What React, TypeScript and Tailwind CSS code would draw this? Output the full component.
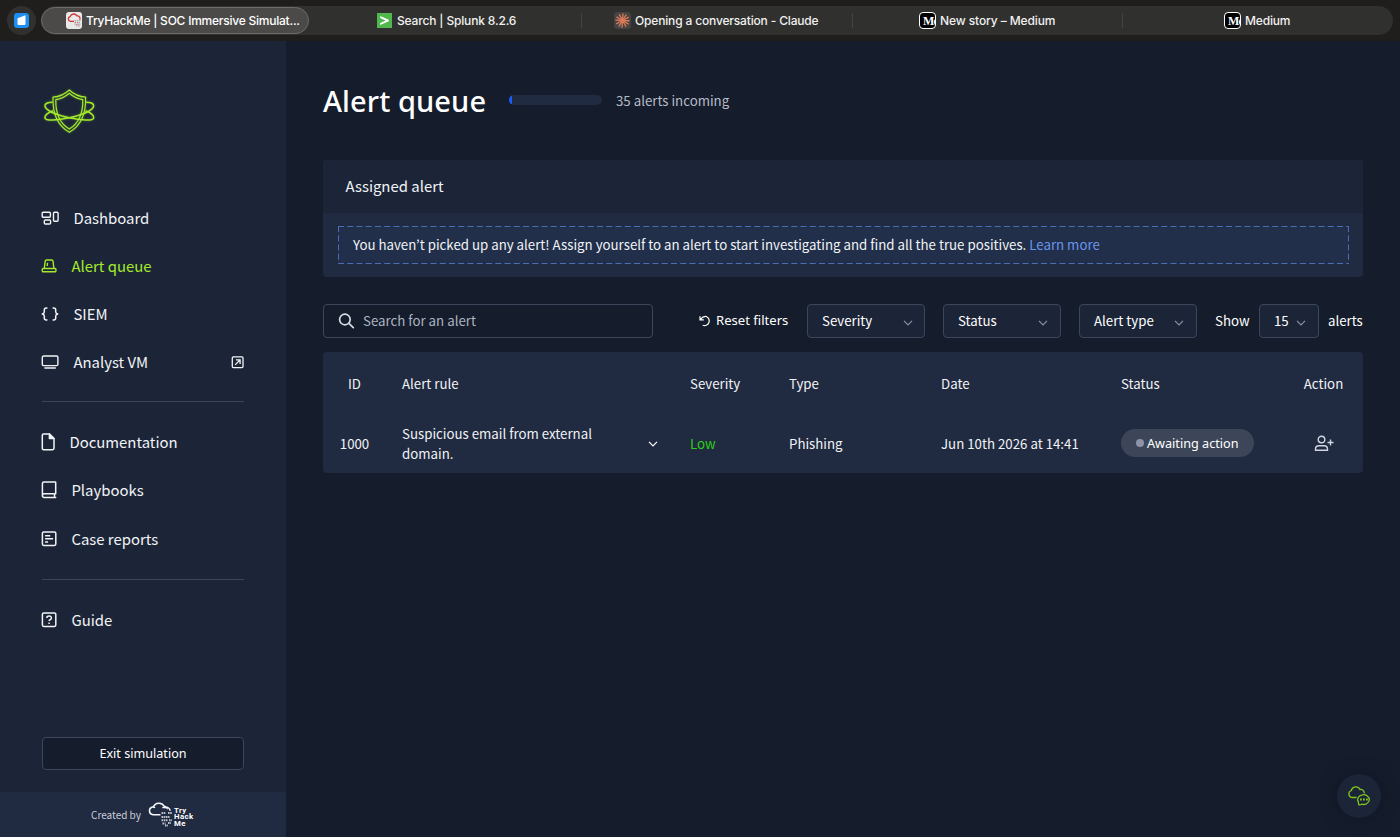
import type { ReactNode } from 'react';

const SANS = "font-['Noto_Sans_CJK_KR','Open_Sans',sans-serif]";
const HEAD = "font-['Noto_Sans',sans-serif]";

function ThmFavicon() {
  return (
    <svg width="16" height="17" viewBox="0 0 16 17">
      <rect width="16" height="17" rx="3" fill="#e9e9ea" />
      <path d="M8 9.300H4.400a2.400 2.400 0 0 1-.3-4.700A3.800 3.800 0 0 1 11 3.900a2.600 2.600 0 0 1 2.700 3.800" fill="none" stroke="#c8373b" strokeWidth="1.300" />
      <path d="M8.500 8.500h6M8.500 10.300h4M8.500 12.100h6M10 14h4.500" stroke="#a9a3a6" strokeWidth="1.200" strokeDasharray="1.600 .8" />
      <path d="M9 10.400h5M10 12.800h4" stroke="#d06468" strokeWidth=".8" strokeDasharray="1 1" />
    </svg>
  );
}

function SplunkFavicon() {
  return (
    <svg width="15" height="15" viewBox="0 0 15 15">
      <rect width="15" height="15" fill="#50b84c" />
      <path d="M3.200 3.100 11.800 6.800v1.500L3.200 12v-2l5.400-2.500-5.400-2.400z" fill="#fff" />
    </svg>
  );
}

function BurstFavicon() {
  const rays = [4, 33, 62, 92, 121, 150, 184, 212, 242, 273, 301, 332];
  return (
    <svg width="17" height="17" viewBox="0 0 17 17">
      <rect width="17" height="17" rx="3.500" fill="#454443" />
      <g stroke="#de7a5b" strokeWidth="1.300" strokeLinecap="round">
        {rays.map((a) => (
          <path key={a} d="M8.500 8.500V1.900" transform={`rotate(${a} 8.500 8.500)`} />
        ))}
      </g>
    </svg>
  );
}

function MediumFavicon() {
  return (
    <span className="flex h-[17px] w-[17px] items-center overflow-hidden rounded-[4px] border border-white bg-black pl-[3px] font-['Liberation_Serif',serif] text-[12px] leading-none font-bold tracking-[-0.8px] text-white">
      Me
    </span>
  );
}

function Tab({ icon, children, className }: { icon: ReactNode; children: ReactNode; className: string }) {
  return (
    <div className={`flex shrink-0 items-center gap-[4px] whitespace-nowrap ${className}`}>
      {icon}
      <span>{children}</span>
    </div>
  );
}

function TabBar() {
  return (
    <header className="flex h-[41px] shrink-0 items-center bg-[#1f1e1c] pl-[7px] font-['Inter',sans-serif] text-[12px] font-medium tracking-[-0.160px] text-[#f1f1f0]">
      <div className="flex h-[29px] w-[29px] items-center justify-center rounded-full bg-[#30302f]">
        <svg width="16" height="15" viewBox="0 0 16 15">
          <rect width="15" height="15" rx="3.200" fill="#1d8ff0" />
          <path d="M3.500 5.200 10.700 2.400q.8-.2.8.6V11q0 1-1 1h-6q-1 0-1-1z" fill="#fff" />
        </svg>
      </div>
      <div className="ml-[5px] flex h-[29px] w-[1352px] items-center rounded-full bg-[#30302f]">
        <Tab icon={<ThmFavicon />} className="h-[27px] w-[268px] rounded-full border border-[#6d6c6b] bg-[#4b4a49] pl-[24px] tracking-[-0.230px] text-white">
          TryHackMe | SOC Immersive Simulat...
        </Tab>
        <Tab icon={<SplunkFavicon />} className="w-[272px] pl-[68px]">
          <span className="ml-[1px]">Search | Splunk 8.2.6</span>
        </Tab>
        <span className="h-[15px] w-px bg-[#454443]" />
        <Tab icon={<BurstFavicon />} className="w-[270px] pl-[32px]">Opening a conversation - Claude</Tab>
        <span className="h-[15px] w-px bg-[#454443]" />
        <Tab icon={<MediumFavicon />} className="w-[269px] pl-[66px] tracking-[-0.1px]">New story – Medium</Tab>
        <span className="h-[15px] w-px bg-[#454443]" />
        <Tab icon={<MediumFavicon />} className="pl-[101px]">Medium</Tab>
      </div>
    </header>
  );
}

function ShieldLogo() {
  return (
    <svg className="ml-[1px] drop-shadow-[0_0_1px_#a3ea2a60]" width="54" height="46" viewBox="-1 0 54 46" fill="none" stroke="#a3ea2a">
      <path d="M26.300 1C30.500 5 36 7.700 42.600 8.200C43 20 41 35 26.300 43.200C11.600 35 9.600 20 10 8.200C16.600 7.700 22.100 5 26.300 1Z" strokeWidth="1.200" />
      <path d="M26.300 4.300C30.500 8 35 10.200 39.800 10.700C40 21 38 33 26.300 40C14.600 33 12.600 21 12.800 10.700C17.600 10.200 22.100 8 26.300 4.300Z" strokeWidth="1.200" />
      <path d="M9.500 13.300C4.500 13.300 1.500 14.500 2 17.300C3 21.500 14 26 26.300 28.800C37 31.200 50 32.500 50.700 28.800C51 26.500 47.500 23.800 42.500 21.800" strokeWidth="1.500" />
      <path d="M43.100 13.300C48.100 13.300 51.100 14.500 50.600 17.300C49.600 21.500 38.600 26 26.300 28.800C15.600 31.200 2.600 32.500 1.900 28.800C1.600 26.500 5.100 23.800 10.100 21.800" strokeWidth="1.500" />
    </svg>
  );
}

const icons = {
  dashboard: (
    <svg width="18" height="15" viewBox="0 0 18 15" fill="none" stroke="currentColor" strokeWidth="1.400">
      <rect x="1.200" y="1.200" width="8.200" height="5" rx="1" />
      <rect x="3.300" y="9" width="6.300" height="4" rx="1" />
      <rect x="12.500" y="1.200" width="4.600" height="9" rx="1" />
    </svg>
  ),
  alert: (
    <svg width="16" height="14" viewBox="0 0 16 14" fill="none" stroke="currentColor" strokeWidth="1.400">
      <rect x="1.300" y="9.500" width="13.600" height="3.200" rx=".8" />
      <path d="M3.300 9.300 4.200 2.200Q4.400 1 5.500 1h5.200Q11.800 1 12 2.200l.9 7.100M6.500 3.700 6.200 7" />
    </svg>
  ),
  siem: (
    <svg width="18" height="14" viewBox="0 0 18 14" fill="none" stroke="currentColor" strokeWidth="1.500" strokeLinecap="round" strokeLinejoin="round">
      <path d="M5.900 1h-.6q-2 0-2 2v1.700q0 1.800-2 2.300 2 .5 2 2.300V11q0 2 2 2h.6M12.100 1h.6q2 0 2 2v1.700q0 1.800 2 2.300-2 .5-2 2.300V11q0 2-2 2h-.6" />
    </svg>
  ),
  vm: (
    <svg width="18" height="14" viewBox="0 0 18 14" fill="none" stroke="currentColor" strokeWidth="1.400" strokeLinecap="round">
      <rect x="1.300" y="1" width="15.600" height="9.600" rx="1.300" />
      <path d="M3.900 13h10.400" />
    </svg>
  ),
  doc: (
    <svg width="14" height="18" viewBox="0 0 14 18" fill="none" stroke="currentColor" strokeWidth="1.500" strokeLinejoin="round">
      <path d="M2.600 1H8.400L13 5.500v9.800q0 1.400-1.400 1.400h-9Q1.300 16.700 1.300 15.300V2.300Q1.300 1 2.600 1Z" />
      <path d="M8.400 1v4.500h4.500z" fill="currentColor" />
    </svg>
  ),
  book: (
    <svg width="16" height="18" viewBox="0 0 16 18" fill="none" stroke="currentColor" strokeWidth="1.500" strokeLinecap="round" strokeLinejoin="round">
      <path d="M14.700 16.500H3.300Q1.400 16.500 1.400 14.700V2.600Q1.400 1 3 1h11.300q.4 0 .4.500v11.300H3.300Q1.400 12.800 1.400 14.700M13.500 13v3.300" />
    </svg>
  ),
  report: (
    <svg width="16" height="16" viewBox="0 0 16 16" fill="none" stroke="currentColor" strokeWidth="1.500">
      <rect x="1.400" y="1" width="13.400" height="13.400" rx="1.300" />
      <path d="M4.100 4.700h5.200M4.100 7.800h8M4.100 10.900h3" />
    </svg>
  ),
  guide: (
    <svg width="16" height="16" viewBox="0 0 16 16" fill="none" stroke="currentColor" strokeWidth="1.500">
      <rect x="1.400" y="1" width="13.400" height="13.400" rx="1.300" />
      <path d="M5.800 6.100Q5.800 4 8.100 4T10.400 6Q10.400 7.200 9.100 7.700 8.100 8.100 8.100 9.100M8.100 10.400v1.700" />
    </svg>
  ),
};

function NavItem({ icon, label, active, external }: { icon: ReactNode; label: string; active?: boolean; external?: boolean }) {
  return (
    <a className={`flex h-[48px] items-center text-[14.900px] ${active ? 'text-[#a3ea2a]' : 'text-[#f1f3f6]'}`}>
      {icon}
      <span className="ml-[14.400px] leading-none">{label}</span>
      {external && (
        <svg className="ml-auto" width="13" height="13" viewBox="0 0 13 13" fill="none" stroke="currentColor" strokeWidth="1.300">
          <rect x="1.300" y=".9" width="10.700" height="10.700" rx="1" />
          <path d="M4.100 8.900 9 4M5 3.800h4.100v4.100" />
        </svg>
      )}
    </a>
  );
}

function ThmLogo() {
  return (
    <div className="flex">
      <svg width="25" height="27" viewBox="0 0 25 27" fill="none" stroke="#f4f6f9">
        <path d="M12.500 13.800H5A4 4 0 0 1 4.300 6Q5.700 5.800 7 6.700 6.200 6 5.300 5.900A6.100 6.100 0 0 1 16.200 5.200Q17.700 5.300 18.500 6.900 16.200 5.600 14.500 6.700 21 4.600 22.300 9.700" strokeWidth="1.500" />
        <path d="M13.500 12h4M20 12h4M13.500 16h8M13.500 19.300h6M21 19.300h3M14.500 22.500h3M20 22h3M17 24.500h3" strokeWidth="2" strokeDasharray="1.600 .6" opacity=".75" />
      </svg>
      <div className="flex flex-col pt-[6.500px] pl-[1px] font-['Roboto',sans-serif] text-[7.800px] leading-[6.700px] font-bold tracking-[0.450px] text-white">
        <span>Try</span>
        <span>Hack</span>
        <span>Me</span>
      </div>
    </div>
  );
}

function Sidebar() {
  return (
    <aside className="flex w-[286px] shrink-0 flex-col bg-[#1c2538]">
      <div className="flex flex-1 flex-col pt-[48px] pr-[42px] pl-[41px]">
        <ShieldLogo />
        <nav className="mt-[59px] flex flex-col">
          <NavItem icon={icons.dashboard} label="Dashboard" />
          <NavItem icon={icons.alert} label="Alert queue" active />
          <NavItem icon={icons.siem} label="SIEM" />
          <NavItem icon={icons.vm} label="Analyst VM" external />
          <hr className="mt-[15px] mb-[16px] ml-[1px] border-[#3c465b]" />
          <NavItem icon={icons.doc} label="Documentation" />
          <NavItem icon={icons.book} label="Playbooks" />
          <div className="pt-[1px]">
            <NavItem icon={icons.report} label="Case reports" />
          </div>
          <hr className="mt-[16px] mb-[16px] ml-[1px] border-[#3c465b]" />
          <NavItem icon={icons.guide} label="Guide" />
        </nav>
        <button className={`mt-auto mb-[22px] ml-[1px] h-[33px] w-[202px] rounded-[4px] border border-[#3d475b] bg-[#151c2b] pt-[1px] text-[12.600px] text-white ${HEAD}`}>
          Exit simulation
        </button>
      </div>
      <footer className="flex h-[45px] items-center bg-[#202a40] pl-[91px] text-[10px] text-[#c9ced8]">
        <span className="mr-[7px]">Created by</span>
        <ThmLogo />
      </footer>
    </aside>
  );
}

function Chevron({ className }: { className: string }) {
  return (
    <svg className={className} width="10" height="6" viewBox="0 0 10 6" fill="none" stroke="currentColor" strokeWidth="1.200">
      <path d="M1 .8 5 4.800 9 .8" />
    </svg>
  );
}

function Select({ label, className }: { label: string; className: string }) {
  return (
    <div className={`flex h-[34px] shrink-0 items-center justify-between rounded-[4px] border border-[#3b465b] bg-[#1c2538] pl-[14px] text-white ${className}`}>
      <span>{label}</span>
      <Chevron className="mt-[3px] text-[#8790a2]" />
    </div>
  );
}

const COLS = 'grid grid-cols-[79px_288px_99px_152px_180px_163px_79px] items-center';

function AlertTable() {
  return (
    <section className="mt-[14px] h-[121px] rounded-[4px] bg-[#202a40] text-[13.280px] text-[#f1f3f6]">
      <div className={`${COLS} h-[63px]`}>
        <span className="w-[63px] text-center">ID</span>
        <span>Alert rule</span>
        <span>Severity</span>
        <span>Type</span>
        <span>Date</span>
        <span>Status</span>
        <span className="text-center">Action</span>
      </div>
      <div className={`${COLS} h-[58px]`}>
        <span className="w-[63px] text-center">1000</span>
        <div className="flex items-center justify-between pr-[32px]">
          <span className="w-[210px] leading-[20px]">Suspicious email from external domain.</span>
          <Chevron className="text-white" />
        </div>
        <span className="text-[#2fd016]">Low</span>
        <span>Phishing</span>
        <span>Jun 10th 2026 at 14:41</span>
        <span className={`mb-[2px] flex h-[28px] w-[133px] items-center rounded-full bg-[#3d4658] pl-[15px] text-[12.650px] text-white ${HEAD}`}>
          <i className="mr-[3px] h-[8px] w-[8px] rounded-full bg-[#8d94a8]" />
          Awaiting action
        </span>
        <svg className="mx-auto mb-[2px]" width="20" height="17" viewBox="0 0 20 17" fill="none" stroke="#cfd6e2" strokeWidth="1.400">
          <circle cx="7.500" cy="4.500" r="3.300" />
          <path d="M1.500 15.300V14Q1.500 10.800 5 10.800h5q3.500 0 3.500 3.200v1.300zM16.500 4.500v6M13.500 7.500h6" />
        </svg>
      </div>
    </section>
  );
}

function AlertQueue() {
  return (
    <main className="relative flex flex-1 flex-col bg-[#151c2b] pt-[37px] pr-[37px] pl-[37px]">
      <div className="flex h-[44px] items-center">
        <h1 className={`w-[186px] text-[29px] leading-none font-medium tracking-[0.100px] text-white ${HEAD}`}>Alert queue</h1>
        <div className="h-[10px] w-[93px] overflow-hidden rounded-full bg-[#202a40]">
          <div className="h-full w-[3px] bg-[#1a5cf5]" />
        </div>
        <span className="mt-[2px] ml-[14px] text-[13.280px] text-[#b5bbc8]">35 alerts incoming</span>
      </div>

      <section className="mt-[38px] h-[117px] overflow-hidden rounded-[4px] bg-[#202a40]">
        <h2 className="flex h-[53px] items-center bg-[#1c2538] pl-[22.500px] text-[14.900px] text-[#f1f3f6]">Assigned alert</h2>
        <div className="relative mt-[13px] mr-[14px] ml-[15px] flex h-[38px] items-center bg-[#212f4a] pl-[15px] text-[13.280px] whitespace-pre text-[#f1f3f6]">
          <svg className="absolute inset-0 h-full w-full" fill="none" stroke="#4a6db4" strokeDasharray="6 3.250">
            <path d="M0 .5h1011M.5 0v38M0 37.500h1011M1010.500 0v38" />
          </svg>
          You haven’t picked up any alert! Assign yourself to an alert to start investigating and find all the true positives. <a className="text-[#6b95ee]">Learn more</a>
        </div>
      </section>

      <div className="mt-[27px] flex h-[34px] items-center text-[13.280px] text-white">
        <div className="flex h-[34px] w-[330px] shrink-0 items-center rounded-[4px] border border-[#3b465b] pl-[14px] text-[#adb4c2]">
          <svg className="mr-[8px]" width="17" height="16" viewBox="0 0 17 16" fill="none" stroke="#d5dae4" strokeWidth="1.700" strokeLinecap="round">
            <circle cx="6.900" cy="6.500" r="5.300" />
            <path d="m10.900 10.400 4.400 4.300" />
          </svg>
          Search for an alert
        </div>
        <button className={`ml-auto flex shrink-0 items-center text-[13.100px] ${HEAD}`}>
          <svg className="mr-[5px]" width="12" height="12" viewBox="0 0 12 12" fill="none" stroke="currentColor" strokeWidth="1.200">
            <path d="M1 1.200v3.600h3.800M1.300 4.500Q4 1.100 7.300 1.500A4.600 4.600 0 1 1 3.700 10.200" />
          </svg>
          <span className="w-[73px] text-left whitespace-nowrap">Reset filters</span>
        </button>
        <Select label="Severity" className="ml-[18px] w-[118px] pr-[11px]" />
        <Select label="Status" className="ml-[18px] w-[118px] pr-[12px]" />
        <Select label="Alert type" className="ml-[18px] w-[118px] pr-[12px]" />
        <span className="ml-[18px] w-[44px]">Show</span>
        <Select label="15" className="w-[60px] pr-[12px]" />
        <span className="ml-[9px] w-[35px]">alerts</span>
      </div>

      <AlertTable />

      <button className="absolute right-[19px] bottom-[19px] flex h-[44px] w-[44px] items-center justify-center rounded-full bg-[#1c2538] shadow-[0_0_16px_#101623]">
        <svg width="24" height="22" viewBox="0 0 24 22" fill="none" stroke="#7fc41c" strokeWidth="1.300">
          <path d="M9.500 12.500H4.500A3.700 3.700 0 0 1 4.300 5.500 4.600 4.600 0 0 1 13 4.500 3.600 3.600 0 0 1 17.300 8.400" />
          <path d="M11.800 19.800 11.300 16.800A5.800 4.900 0 1 1 14.500 19.200Q13.300 20.100 11.800 19.800Z" />
          <path d="M13 14.500h8" strokeWidth="1.800" strokeDasharray="1.800 1.200" />
        </svg>
      </button>
    </main>
  );
}

export default function App() {
  return (
    <div className={`flex h-[837px] w-[1400px] flex-col overflow-hidden ${SANS}`}>
      <TabBar />
      <div className="flex min-h-0 flex-1">
        <Sidebar />
        <AlertQueue />
      </div>
    </div>
  );
}
